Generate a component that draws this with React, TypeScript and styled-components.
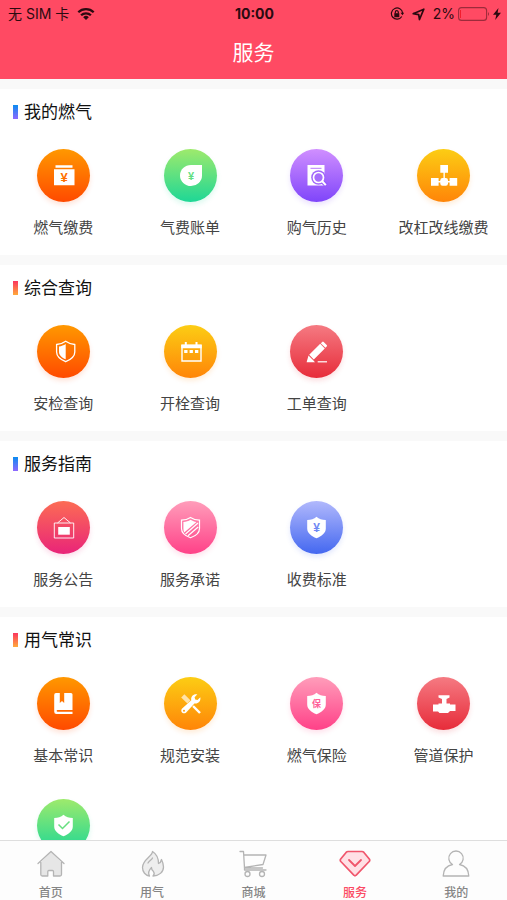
import React from "react";
import styled, { createGlobalStyle } from "styled-components";

const GlobalStyle = createGlobalStyle`
  * { box-sizing: border-box; }
  body {
    margin: 0;
    background: #fff;
    font-family: "Liberation Sans", "Noto Sans CJK SC", sans-serif;
  }
`;

const Page = styled.div`
  height: 100vh;
  display: flex;
  flex-direction: column;
  overflow: hidden;
`;

const Header = styled.header`
  flex: none;
  background: #ff4a63;
`;

const StatusBar = styled.div`
  display: grid;
  grid-template-columns: 1fr auto 1fr;
  align-items: center;
  height: 28px;
  padding: 0 6px 0 8px;
  color: #2b0a10;
  font-family: Inter, "Noto Sans CJK SC", sans-serif;
  font-size: 14px;
  line-height: 20px;
`;

const StatusGroup = styled.div<{ $end?: boolean }>`
  display: flex;
  align-items: center;
  justify-content: ${(p) => (p.$end ? "flex-end" : "flex-start")};
  gap: 8px;
`;

const Battery = styled.span`
  display: flex;
  align-items: center;
  gap: 3px;
`;

const Clock = styled.time`
  font-weight: 700;
`;

const PageTitle = styled.h1`
  margin: 0;
  height: 51px;
  color: #fff;
  font-size: 21px;
  font-weight: 400;
  line-height: 50px;
  text-align: center;
`;

const Content = styled.main`
  flex: 1;
  min-height: 0;
  display: flex;
  flex-direction: column;
  gap: 10px;
  padding-top: 10px;
  overflow-y: auto;
  scrollbar-width: none;
  background: #f9f9f9;
`;

const Section = styled.section`
  flex: none;
  padding-bottom: 17px;
  background: #fff;
`;

const SectionTitle = styled.h2<{ $tone: "cool" | "warm" }>`
  display: flex;
  align-items: center;
  gap: 6px;
  height: 47px;
  margin: 0;
  padding: 0 13px;
  color: #111;
  font-size: 17px;
  font-weight: 400;
  line-height: 24px;

  &::before {
    content: "";
    width: 5px;
    height: 14px;
    margin-bottom: 2px;
    background: ${(p) =>
      p.$tone === "cool"
        ? "linear-gradient(#0a8cf0, #9068ff)"
        : "linear-gradient(#fb355f, #ffaa3c)"};
  }
`;

const ServiceGrid = styled.div`
  display: grid;
  grid-template-columns: repeat(4, 1fr);
  row-gap: 20px;
`;

const ServiceButton = styled.button`
  display: flex;
  flex-direction: column;
  align-items: center;
  gap: 16px;
  padding: 13px 0 0;
  border: 0;
  background: none;
  color: #444;
  font: inherit;
  font-size: 15px;
  line-height: 20px;
  white-space: nowrap;
  cursor: pointer;
`;

const Badge = styled.span<{ $from: string; $to: string }>`
  display: block;
  width: 53px;
  height: 53px;
  border-radius: 50%;
  background: linear-gradient(${(p) => p.$from}, ${(p) => p.$to});
  box-shadow: 0 3px 5px ${(p) => p.$to}26;

  svg { display: block; }
`;

const TabBar = styled.nav`
  flex: none;
  display: grid;
  grid-template-columns: repeat(5, 1fr);
  height: 60px;
  border-top: 1px solid #dedede;
  background: #fdfdfd;
`;

const Tab = styled.a<{ $active?: boolean }>`
  display: flex;
  flex-direction: column;
  align-items: center;
  gap: 4px;
  padding-top: 8px;
  color: ${(p) => (p.$active ? "#fb4a64" : "#858585")};
  font-family: "Noto Sans CJK SC", sans-serif;
  font-size: 12px;
  font-weight: 500;
  line-height: 18px;
  text-decoration: none;

  svg { display: block; color: ${(p) => (p.$active ? "#f0566c" : "#b4b4b4")}; }
`;

const palette = {
  orange: ["#ff9800", "#ff4a00"],
  green: ["#9eea6c", "#1ed796"],
  purple: ["#d08fff", "#7f45fa"],
  yellow: ["#fccd14", "#ff8508"],
  red: ["#f57a82", "#e72c3a"],
  coral: ["#fc6c54", "#e92479"],
  pink: ["#ff9dba", "#ff4188"],
  blue: ["#b1b8fc", "#4468f0"],
};
type Tone = keyof typeof palette;

const SHIELD =
  "M26.5 15.8C29 18 32 19 35.8 19V27.5C35.8 32 31.5 35.300 26.5 37.2C21.5 35.300 17.2 32 17.2 27.5V19C21 19 24 18 26.5 15.8Z";

const GlyphText = ({ x, y, size, fill, children }: { x: number; y: number; size: number; fill: string; children: string }) => (
  <text x={x} y={y} fontSize={size} fill={fill} textAnchor="middle" fontWeight="700" fontFamily='"Liberation Sans", "Noto Sans CJK SC", sans-serif'>
    {children}
  </text>
);

const glyphs: Record<string, React.ReactNode> = {
  wallet: (
    <>
      <path d="M18.5 16.2h17v2.600h-17zM17 20.300h20.5V36.200H17z" />
      <GlyphText x={27} y={33} size={13} fill="#ff7000">¥</GlyphText>
    </>
  ),
  leaf: (
    <>
      <path d="M38 16V26.5A11 10.5 0 1 1 27 16Z" />
      <GlyphText x={27} y={31} size={11} fill="#62df82">¥</GlyphText>
    </>
  ),
  history: (
    <>
      <path d="M17.5 16h17v20.5h-17z" />
      <path d="M20.5 19.3h11" stroke="#b878fc" strokeWidth="1" />
      <circle cx="28.5" cy="28.5" r="7.3" fill="#a066fb" />
      <path d="M33 33L36.5 36.5" stroke="#9459fb" strokeWidth="4.5" />
      <circle cx="28.5" cy="28.5" r="5" fill="#a76dfb" stroke="#fff" strokeWidth="1.7" />
      <path d="M32 32L35.8 36.2" stroke="#fff" strokeWidth="2" />
    </>
  ),
  pipes: (
    <>
      <path d="M23.3 16H31v7.7h-7.7zM14 29h7.6v7.7H14zM32.6 29h7.6v7.7h-7.6z" />
      <rect x="23.3" y="29" width="7.7" height="7.7" rx="2.2" />
      <path d="M27.15 23v6M21 32.8h12" stroke="#fff" strokeWidth="1.4" />
    </>
  ),
  shieldHalf: (
    <>
      <path d="M28.7 16.2C31.5 18.2 34 19.2 37.8 19.5V27C37.8 31 34 34.5 28.7 36.7C23.5 34.5 19.6 31 19.6 27V19.5C23.4 19.2 26 18.2 28.7 16.2Z" fill="none" stroke="#fff" strokeWidth="1.3" />
      <path d="M28.7 19C26.6 20.4 24.5 21.1 22 21.5V27C22 30.2 25 32.7 28.7 34.3Z" />
    </>
  ),
  calendar: (
    <>
      <path d="M18 20.5h19V36H18z" fill="none" stroke="#fff" strokeWidth="1.4" />
      <path d="M17.3 19.5h20.4v3.8H17.3zM20.8 17h2v4h-2zM31.5 17h2v4h-2zM20.2 25h3.3v3h-3.3zM25.6 25h3.3v3h-3.3zM31 25h3.3v3H31z" />
    </>
  ),
  pencil: (
    <>
      <path d="M30.8 18.200L32.2 16.9Q33 16.3 33.7 17L36.7 20Q37.4 20.8 36.7 21.5L35.4 22.8ZM30.200 18.800L34.800 23.400L23.8 34.400L19.200 29.800ZM18.5 30.600L23 35.1L25 37.3H16.6Z" />
      <path d="M27.7 36.8H37" stroke="#fff" strokeWidth="1.2" />
    </>
  ),
  notice: (
    <>
      <path d="M17.3 22h19.4v15H17.3zM20.5 22L27 16.5L33.5 22" fill="none" stroke="#fff" strokeWidth=".9" />
      <path d="M21.2 26h11.6v7.7H21.2z" />
    </>
  ),
  promise: (
    <>
      <path d="M26.5 16.5C29.5 18.5 32 19.2 35.5 19.2V27.5C35.5 32 31.5 35 26.5 36.7C21.5 35 17.5 32 17.5 27.5V19.2C21 19.2 23.5 18.5 26.5 16.5Z" fill="none" stroke="#fff" strokeWidth="1.2" />
      <path d="M26.5 18.7C28.5 20 30.5 20.7 32.5 21L20.2 31.5C19.7 30.5 19.4 29 19.4 27.5V21C22 20.8 24.5 20 26.5 18.7Z" />
      <path d="M21.5 33L34 22M24 34.8L34.2 26" stroke="#fff" strokeWidth="1.3" />
    </>
  ),
  shieldYuan: (
    <>
      <path d={SHIELD} />
      <GlyphText x={26.5} y={31} size={12} fill="#7089f4">¥</GlyphText>
    </>
  ),
  book: (
    <path d="M19 16h3.8v10l2.2-2l2.2 2V16H34a1.5 1.5 0 0 1 1.500 1.500V33H20.500a.7.7 0 0 0 0 1.700H35.500V37H19.500A2.300 2.300 0 0 1 17.200 34.700V18A2 2 0 0 1 19 16Z" />
  ),
  tools: (
    <>
      <path d="M18.800 18.800L25.500 25.500" stroke="#ffe3a8" strokeWidth="4.500" />
      <path d="M28 28L36 36" stroke="#fff" strokeWidth="2.400" />
      <path d="M19.800 34.200L31 23" stroke="#ffad11" strokeWidth="6" />
      <path d="M17.900 31.700L27.300 23.300C26.400 19.500 29.500 16.500 33.400 17.300L30.600 20.200L31.200 22.600L33.500 23.100L36.300 20.300C37.200 24.500 33.700 27.200 30.400 26.500L21.900 35.800C19 37.500 16 34.500 17.900 31.700Z" />
      <circle cx="20" cy="33.800" r="1" fill="#ffa20e" />
    </>
  ),
  insurance: (
    <>
      <path d={SHIELD} />
      <GlyphText x={26.5} y={30} size={9} fill="#ff6098">保</GlyphText>
    </>
  ),
  valve: (
    <path d="M21.5 18.3H32.5V20.5L29.5 22V26.5H33V27.5H38.5V34H33L31 36H22.5L21 34.5H16V27.5H21.5V26.5H25V22L21.5 20.5Z" />
  ),
  shieldCheck: (
    <>
      <path d={SHIELD} />
      <path d="M21.500 25.500L25.500 29.500L32.500 22.500" fill="none" stroke="#67df80" strokeWidth="1.500" />
    </>
  ),
};

type Service = { label: string; glyph: string; tone: Tone };
const sections: { title: string; tone: "cool" | "warm"; items: Service[] }[] = [
  {
    title: "我的燃气",
    tone: "cool",
    items: [
      { label: "燃气缴费", glyph: "wallet", tone: "orange" },
      { label: "气费账单", glyph: "leaf", tone: "green" },
      { label: "购气历史", glyph: "history", tone: "purple" },
      { label: "改杠改线缴费", glyph: "pipes", tone: "yellow" },
    ],
  },
  {
    title: "综合查询",
    tone: "warm",
    items: [
      { label: "安检查询", glyph: "shieldHalf", tone: "orange" },
      { label: "开栓查询", glyph: "calendar", tone: "yellow" },
      { label: "工单查询", glyph: "pencil", tone: "red" },
    ],
  },
  {
    title: "服务指南",
    tone: "cool",
    items: [
      { label: "服务公告", glyph: "notice", tone: "coral" },
      { label: "服务承诺", glyph: "promise", tone: "pink" },
      { label: "收费标准", glyph: "shieldYuan", tone: "blue" },
    ],
  },
  {
    title: "用气常识",
    tone: "warm",
    items: [
      { label: "基本常识", glyph: "book", tone: "orange" },
      { label: "规范安装", glyph: "tools", tone: "yellow" },
      { label: "燃气保险", glyph: "insurance", tone: "pink" },
      { label: "管道保护", glyph: "valve", tone: "red" },
      { label: "", glyph: "shieldCheck", tone: "green" },
    ],
  },
];

const tabs: { label: string; active?: boolean; icon: React.ReactNode }[] = [
  {
    label: "首页",
    icon: (
      <>
        <path d="M6 13V27H12.5V21.5H18.5V27H26V13L16 3Z" fill="#e6e6e6" stroke="none" />
        <path d="M3 14.5L16 2.5L29 14.5M5.8 13.5V25.5Q5.8 27 7.3 27H12.8V22.5Q12.8 21.5 13.8 21.5H17.5Q18.5 21.5 18.5 22.5V27H25Q26.5 27 26.5 25.5V13.5" />
      </>
    ),
  },
  {
    label: "用气",
    icon: (
      <path fill="#eee" d="M16.5 2.5C16.5 7.5 6.5 10.5 6.5 18.5C6.5 23 9.5 26.5 13.5 27C11.5 23.5 13 21 15.5 18.5C15.5 21 16.5 21.5 17.5 22.5C18.5 24 18 26 17 27C23 27 27.5 23 27.5 18C27.5 15 26.5 12.5 25.5 10.5C25 13 24 14 22.5 14.5C22.5 9 20.5 5 16.5 2.5ZM12 14C13.5 11.5 15.5 11 16.5 9" />
    ),
  },
  {
    label: "商城",
    icon: (
      <>
        <path d="M3 2.5H6.5L7.5 19H25.5M6.8 6H29L26 15.5L7.4 18.5M7.5 19V21H29" />
        <circle cx="10.5" cy="25" r="2.5" />
        <circle cx="25" cy="25" r="2.5" />
      </>
    ),
  },
  {
    label: "服务",
    active: true,
    icon: (
      <>
        <path d="M9 2.5H23Q24 2.5 24.7 3.2L30.3 10Q31.2 11.3 30.2 12.5L17.2 26.2Q16 27.3 14.8 26.2L1.8 12.5Q.8 11.3 1.7 10L7.3 3.2Q8 2.5 9 2.5Z" fill="#ffe0e5" strokeWidth="1.7" />
        <path d="M10 11L16 17L22 11" strokeWidth="1.8" />
      </>
    ),
  },
  {
    label: "我的",
    icon: (
      <path d="M12.5 15.5A7.2 7.2 0 1 1 19.5 15.5C25 16.5 28.5 20.5 28.8 27H3.2C3.5 20.5 7 16.5 12.5 15.5Z" />
    ),
  },
];

export default function App() {
  return (
    <Page>
      <GlobalStyle />
      <Header>
        <StatusBar>
          <StatusGroup>
            <span>无 SIM 卡</span>
            <svg width="18" height="14" viewBox="0 0 18 14" fill="none" stroke="currentColor" strokeWidth="2.3" aria-hidden="true">
              <path d="M1.3 5.3A11 11 0 0 1 16.7 5.3M4.1 8.3A7 7 0 0 1 13.9 8.3" />
              <path d="M6.2 10.2A4 4 0 0 1 11.8 10.2L9 13Z" fill="currentColor" stroke="none" />
            </svg>
          </StatusGroup>
          <Clock>10:00</Clock>
          <StatusGroup $end>
            <svg width="14" height="14" viewBox="0 0 14 14" fill="none" stroke="currentColor" strokeWidth="1.2" aria-hidden="true">
              <path d="M11.8 9.5A5.6 5.6 0 1 1 12.6 6" />
              <path d="M10.5 5.7H14.3L12.5 8.2Z" fill="currentColor" stroke="none" />
              <path d="M4.3 6.2h5v4h-5z" fill="currentColor" stroke="none" />
              <path d="M5.3 6.5V5.2a1.5 1.5 0 0 1 3 0V6.5" />
            </svg>
            <svg width="13" height="13" viewBox="0 0 13 13" fill="none" stroke="currentColor" strokeWidth="1.7" strokeLinejoin="round" aria-hidden="true">
              <path d="M11.8 1.2L7.5 11.5L6.7 6.600L1.2 5.7Z" />
            </svg>
            <Battery>
              <span>2%</span>
              <svg width="32" height="14" viewBox="0 0 32 14" aria-hidden="true">
                <rect x=".6" y=".6" width="28" height="12.8" rx="3" fill="none" stroke="#9c2b3b" strokeWidth="1.1" />
                <path d="M2 3h1v8H2z" fill="#f21d2d" />
                <path d="M30 5Q32 7 30 9Z" fill="#9c2b3b" />
              </svg>
              <svg width="8" height="12" viewBox="0 0 8 12" fill="currentColor" aria-hidden="true">
                <path d="M5.5 0L0 6.8H3.3L2.2 12L8 4.8H4.6Z" />
              </svg>
            </Battery>
          </StatusGroup>
        </StatusBar>
        <PageTitle>服务</PageTitle>
      </Header>
      <Content>
        {sections.map((section) => (
          <Section key={section.title}>
            <SectionTitle $tone={section.tone}>{section.title}</SectionTitle>
            <ServiceGrid>
              {section.items.map((item) => (
                <ServiceButton key={item.glyph} type="button">
                  <Badge $from={palette[item.tone][0]} $to={palette[item.tone][1]}>
                    <svg width="53" height="53" viewBox="0 0 53 53" fill="#fff" aria-hidden="true">
                      {glyphs[item.glyph]}
                    </svg>
                  </Badge>
                  <span>{item.label}</span>
                </ServiceButton>
              ))}
            </ServiceGrid>
          </Section>
        ))}
      </Content>
      <TabBar>
        {tabs.map((tab) => (
          <Tab key={tab.label} href="#" $active={tab.active} aria-current={tab.active ? "page" : undefined}>
            <svg width="32" height="30" viewBox="0 0 32 30" fill="none" stroke="currentColor" strokeWidth="1.3" strokeLinejoin="round" strokeLinecap="round" aria-hidden="true">
              {tab.icon}
            </svg>
            <span>{tab.label}</span>
          </Tab>
        ))}
      </TabBar>
    </Page>
  );
}
